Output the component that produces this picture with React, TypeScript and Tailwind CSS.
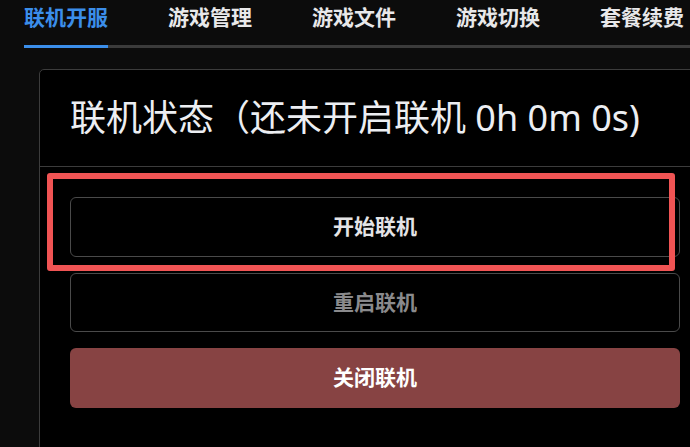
import React from 'react';

const tabs = ['联机开服', '游戏管理', '游戏文件', '游戏切换', '套餐续费'];

const App: React.FC = () => {
  return (
    <div
      className="relative w-[690px] h-[447px] overflow-hidden bg-[#0c0c0c]"
      style={{ fontFamily: '"Noto Sans", "Noto Sans CJK SC", sans-serif' }}
    >
      {/* tabs */}
      <div className="ml-[24px] w-[700px] flex gap-[60px] border-b-[3px] border-[#3b3b3b]">
        {tabs.map((t, i) => (
          <div
            key={t}
            className={
              'shrink-0 -mb-[3px] pt-[2px] pb-[13px] leading-[30px] text-[21px] font-bold whitespace-nowrap border-b-[3px] ' +
              (i === 0 ? 'text-[#3b8eea] border-[#3b8eea]' : 'text-[#e8e8ea] border-transparent')
            }
          >
            {t}
          </div>
        ))}
      </div>

      {/* card */}
      <div className="ml-[39px] mt-[21px] w-[672px] h-[400px] bg-black border border-[#3c3c3c] rounded-[5px]">
        <div className="h-[97px] px-[30px] flex items-center border-b border-[#3c3c3c]">
          <h2 className="text-[36px] font-normal text-[#eceef2] whitespace-nowrap">
            联机状态（还未开启联机 0h 0m 0s)
          </h2>
        </div>

        <div className="px-[30px] pt-[30px] flex flex-col gap-[16px]">
          <button className="h-[60px] w-full rounded-[6px] border border-[#4a4a4a] bg-black text-[21px] font-bold text-[#e4e4e6]">
            开始联机
          </button>
          <button className="h-[59px] w-full rounded-[6px] border border-[#4a4a4a] bg-black text-[21px] font-bold text-[#8a8a8c]">
            重启联机
          </button>
          <button className="h-[60px] w-full rounded-[6px] bg-[#874343] text-[21px] font-bold text-white">
            关闭联机
          </button>
        </div>
      </div>

      {/* annotation highlight */}
      <div className="absolute left-[47px] top-[173px] w-[628px] h-[98px] border-[6px] border-[#f05454] rounded-[3px] pointer-events-none" />
    </div>
  );
};

export default App;
